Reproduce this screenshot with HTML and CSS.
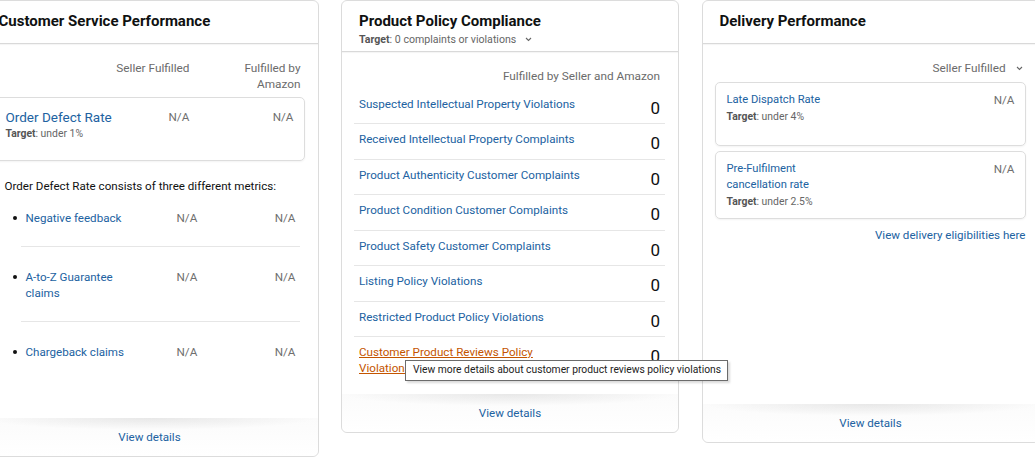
FILE: index.html
```html
<!DOCTYPE html>
<html lang="en">
<head>
    <meta charset="UTF-8">
    <meta name="viewport" content="width=device-width, initial-scale=1.0">
    <title>Account Health</title>
    <link rel="stylesheet" href="styles.css">
</head>
<body>
    <div class="dashboard">
        <!-- Customer service -->
        <section class="card card-service">
            <header class="card-header">
                <h2>Customer Service Performance</h2>
            </header>
            <div class="card-body">
                <div class="col-heads">
                    <span class="col-seller">Seller Fulfilled</span>
                    <span class="col-fba">Fulfilled by Amazon</span>
                </div>
                <div class="metric-box odr-box">
                    <div class="metric-name">
                        <a href="#" class="odr-link">Order Defect Rate</a>
                        <div class="target"><b>Target</b>: under 1%</div>
                    </div>
                    <span class="value">N/A</span>
                    <span class="value value-right">N/A</span>
                </div>
                <p class="note">Order Defect Rate consists of three different metrics:</p>
                <ul class="sub-metrics">
                    <li>
                        <div class="sub-row">
                            <span class="dot"></span>
                            <a href="#">Negative feedback</a>
                            <span class="value">N/A</span>
                            <span class="value value-right">N/A</span>
                        </div>
                    </li>
                    <li>
                        <div class="sub-row">
                            <span class="dot"></span>
                            <a href="#">A-to-Z Guarantee claims</a>
                            <span class="value">N/A</span>
                            <span class="value value-right">N/A</span>
                        </div>
                    </li>
                    <li>
                        <div class="sub-row">
                            <span class="dot"></span>
                            <a href="#">Chargeback claims</a>
                            <span class="value">N/A</span>
                            <span class="value value-right">N/A</span>
                        </div>
                    </li>
                </ul>
            </div>
            <footer class="card-footer"><a href="#">View details</a></footer>
        </section>

        <!-- Product policy -->
        <section class="card card-policy">
            <header class="card-header">
                <h2>Product Policy Compliance</h2>
                <div class="header-target">
                    <b>Target</b>: 0 complaints or violations
                    <svg class="chevron" width="7" height="5" viewBox="0 0 7 5"><path d="M1 1l2.5 2.5L6 1" fill="none" stroke="#666" stroke-width="1.1"/></svg>
                </div>
            </header>
            <div class="card-body">
                <div class="policy-head">Fulfilled by Seller and Amazon</div>
                <div class="policy-row"><a href="#">Suspected Intellectual Property Violations</a><span class="count">0</span></div>
                <div class="policy-row"><a href="#">Received Intellectual Property Complaints</a><span class="count">0</span></div>
                <div class="policy-row"><a href="#">Product Authenticity Customer Complaints</a><span class="count">0</span></div>
                <div class="policy-row"><a href="#">Product Condition Customer Complaints</a><span class="count">0</span></div>
                <div class="policy-row"><a href="#">Product Safety Customer Complaints</a><span class="count">0</span></div>
                <div class="policy-row"><a href="#">Listing Policy Violations</a><span class="count">0</span></div>
                <div class="policy-row"><a href="#">Restricted Product Policy Violations</a><span class="count">0</span></div>
                <div class="policy-row policy-row-last"><a href="#" class="hovered">Customer Product Reviews Policy Violations</a><span class="count">0</span></div>
            </div>
            <footer class="card-footer"><a href="#">View details</a></footer>
            <div class="tooltip">View more details about customer product reviews policy violations</div>
        </section>

        <!-- Delivery -->
        <section class="card card-delivery">
            <header class="card-header">
                <h2>Delivery Performance</h2>
            </header>
            <div class="card-body">
                <div class="seller-select">
                    Seller Fulfilled
                    <svg class="chevron" width="7" height="5" viewBox="0 0 7 5"><path d="M1 1l2.5 2.5L6 1" fill="none" stroke="#666" stroke-width="1.1"/></svg>
                </div>
                <div class="metric-box delivery-box">
                    <div class="metric-name">
                        <a href="#">Late Dispatch Rate</a>
                        <div class="target"><b>Target</b>: under 4%</div>
                    </div>
                    <span class="value">N/A</span>
                </div>
                <div class="metric-box delivery-box">
                    <div class="metric-name">
                        <a href="#">Pre-Fulfilment cancellation rate</a>
                        <div class="target"><b>Target</b>: under 2.5%</div>
                    </div>
                    <span class="value">N/A</span>
                </div>
                <a href="#" class="eligibility">View delivery eligibilities here</a>
            </div>
            <footer class="card-footer"><a href="#">View details</a></footer>
        </section>
    </div>
</body>
</html>
```

FILE: styles.css
```css
body {
    margin: 0;
    font-family: Roboto, "Liberation Sans", Arial, sans-serif;
    color: #0f1111;
    background-color: #fff;
    overflow: hidden;
}

a {
    color: #2162a1;
    text-decoration: none;
}

.dashboard {
    display: flex;
    align-items: flex-start;
    gap: 22.5px;
    margin-left: -19.5px;
}

.card {
    position: relative;
    flex: 0 0 338px;
    box-sizing: border-box;
    display: flex;
    flex-direction: column;
    border: 1px solid #dcdcdc;
    border-radius: 6px;
    background-color: #fff;
}

.card-service {
    height: 457px;
}

.card-policy {
    height: 433px;
}

.card-delivery {
    height: 443px;
}

.card-header {
    padding: 10px 17px 12px;
    border-bottom: 1px solid #d9d9d9;
    box-shadow: 0 1px 1px rgba(0, 0, 0, 0.04);
}

.card-header h2 {
    margin: 0;
    font-size: 15px;
    line-height: 20px;
    font-weight: 700;
}

.card-policy .card-header {
    padding-bottom: 3px;
}

.header-target {
    margin-top: 1px;
    font-size: 10.6px;
    line-height: 16px;
    color: #666;
}

.header-target b,
.target b {
    color: #555;
}

.chevron {
    margin-left: 6px;
    vertical-align: 1px;
}

.card-body {
    flex: 1;
    padding: 16px 13px 0 12px;
}

.card-footer {
    flex: none;
    height: 38px;
    box-sizing: border-box;
    padding-top: 11px;
    text-align: center;
    font-size: 11.6px;
    line-height: 16px;
    border-radius: 0 0 6px 6px;
    background:
        radial-gradient(ellipse 50% 12px at 50% 0, rgba(0, 0, 0, 0.08), rgba(0, 0, 0, 0)),
        linear-gradient(#fbfbfb, #fff);
}

/* customer service */
.col-heads {
    display: flex;
    justify-content: flex-end;
    align-items: flex-start;
    gap: 47px;
    padding-right: 4px;
    font-size: 11.8px;
    line-height: 16px;
    color: #6b6b6b;
}

.col-fba {
    width: 64px;
    text-align: right;
}

.metric-box {
    border: 1px solid #dddddd;
    border-radius: 5px;
    box-shadow: 0 1px 2px rgba(0, 0, 0, 0.05);
}

.odr-box {
    display: grid;
    grid-template-columns: 163px 1fr auto;
    margin-top: 5px;
    padding: 10px 10px 18px 11px;
    line-height: 18px;
}

.odr-link {
    font-size: 13.5px;
}

.target {
    font-size: 10.4px;
    line-height: 16px;
    color: #666;
}

.value {
    font-size: 11.7px;
    color: #6f6f6f;
}

.value-right {
    text-align: right;
}

.note {
    margin: 16px 0 0 11px;
    font-size: 11.6px;
    line-height: 18px;
}

.sub-metrics {
    list-style: none;
    margin: 15px 5px 0 19px;
    padding: 0;
}

.sub-metrics li + li {
    padding-top: 22px;
}

.sub-metrics li:not(:last-child)::after {
    content: "";
    display: block;
    height: 1px;
    margin: 20px 0 0 8px;
    background-color: #e6e6e6;
}

.sub-row {
    display: grid;
    grid-template-columns: 13px 151px 1fr auto;
    padding-right: 4px;
    font-size: 11.6px;
    line-height: 16px;
}

.sub-row a {
    max-width: 120px;
}

.dot {
    width: 4px;
    height: 4px;
    margin-top: 6px;
    border-radius: 50%;
    background-color: #111;
}

/* product policy */
.policy-head {
    margin-bottom: 4.5px;
    padding-right: 5px;
    text-align: right;
    font-size: 11.8px;
    line-height: 16px;
    color: #6b6b6b;
}

.policy-row {
    display: flex;
    justify-content: space-between;
    align-items: flex-start;
    padding: 7px 5px 3.5px;
    border-bottom: 1px solid #e6e6e6;
    font-size: 11.65px;
    line-height: 16px;
}

.policy-row-last {
    border-bottom: none;
}

.policy-row-last a {
    max-width: 180px;
}

.hovered {
    color: #c45500;
    text-decoration: underline;
}

.count {
    font-size: 17px;
    line-height: 24px;
}

.tooltip {
    position: absolute;
    z-index: 2;
    left: 63px;
    top: 359px;
    padding: 1px 6px 2px 7px;
    border: 1px solid #6b6b6b;
    background-color: #fff;
    box-shadow: 2px 2px 2px rgba(0, 0, 0, 0.15);
    font-size: 10.3px;
    line-height: 16px;
    color: #222;
    white-space: nowrap;
}

/* delivery */
.seller-select {
    padding-right: 3px;
    text-align: right;
    font-size: 11.8px;
    line-height: 16px;
    color: #6b6b6b;
}

.seller-select .chevron {
    margin-left: 7px;
}

.delivery-box {
    display: flex;
    justify-content: space-between;
    align-items: flex-start;
    box-sizing: border-box;
    min-height: 64px;
    margin-top: 5px;
    padding: 9px 10px 8px 11px;
    font-size: 11.2px;
    line-height: 16px;
}

.seller-select + .delivery-box {
    margin-top: 6px;
}

.delivery-box .metric-name {
    max-width: 120px;
}

.delivery-box .target {
    margin-top: 1px;
}

.eligibility {
    display: block;
    margin-top: 8px;
    text-align: right;
    font-size: 11.6px;
    line-height: 16px;
}
```
